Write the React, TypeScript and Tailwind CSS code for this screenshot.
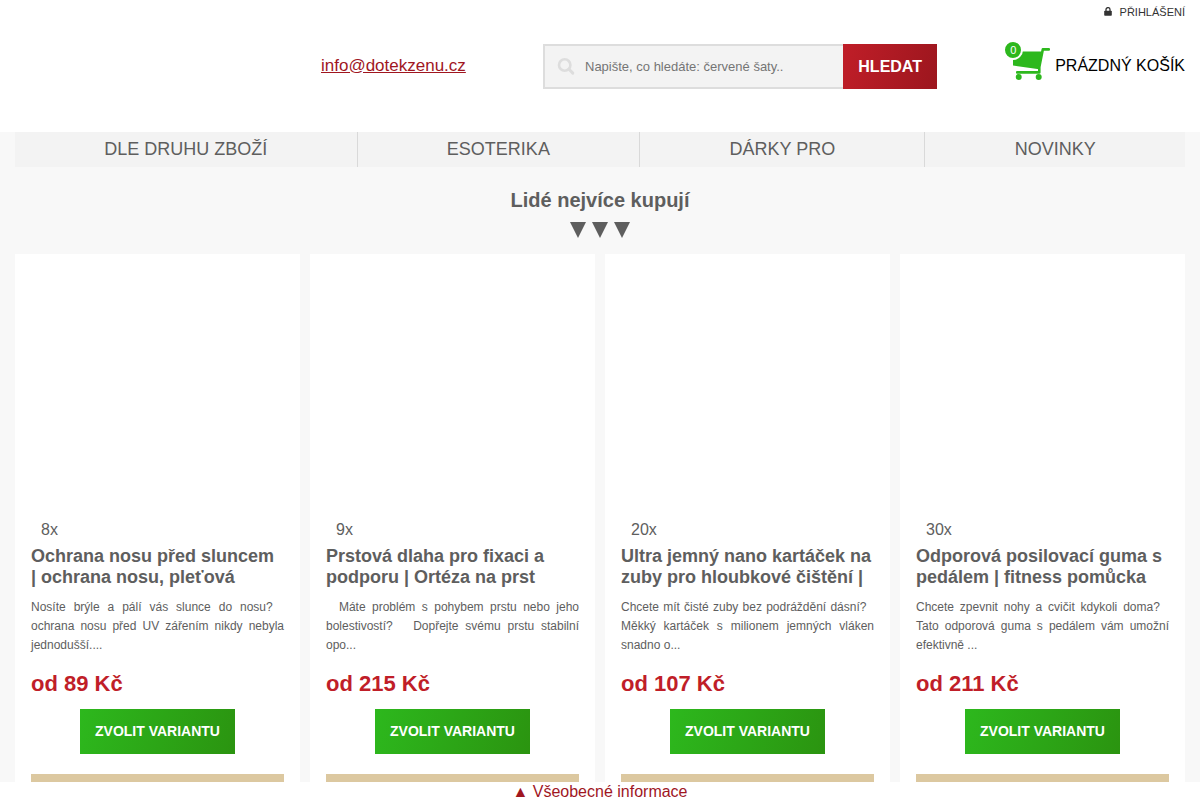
import React from "react";

type Product = {
  sold: string;
  title: string;
  text: string;
  price: string;
};

const categories = ["Dle druhu zboží", "Esoterika", "Dárky pro", "Novinky"];

const products: Product[] = [
  {
    sold: "8x",
    title: "Ochrana nosu před sluncem | ochrana nosu, pleťová",
    text: "Nosíte brýle a pálí vás slunce do nosu?\u00a0\u00a0 ochrana nosu před UV zářením nikdy nebyla jednodušší....",
    price: "od 89 Kč",
  },
  {
    sold: "9x",
    title: "Prstová dlaha pro fixaci a podporu | Ortéza na prst",
    text: "\u00a0\u00a0Máte problém s pohybem prstu nebo jeho bolestivostí?\u00a0\u00a0 Dopřejte svému prstu stabilní opo...",
    price: "od 215 Kč",
  },
  {
    sold: "20x",
    title: "Ultra jemný nano kartáček na zuby pro hloubkové čištění |",
    text: "Chcete mít čisté zuby bez podráždění dásní?\u00a0\u00a0 Měkký kartáček s milionem jemných vláken snadno o...",
    price: "od 107 Kč",
  },
  {
    sold: "30x",
    title: "Odporová posilovací guma s pedálem | fitness pomůcka",
    text: "Chcete zpevnit nohy a cvičit kdykoli doma?\u00a0\u00a0 Tato odporová guma s pedálem vám umožní efektivně ...",
    price: "od 211 Kč",
  },
];

function LockIcon() {
  return (
    <svg className="h-[11px] w-2" viewBox="0 0 8 11" aria-hidden="true">
      <rect x="0.2" y="3.8" width="7.6" height="5" rx="0.8" fill="#333333" />
      <path d="M2 4.4V2.6a2 2 0 0 1 4 0v1.8" fill="none" stroke="#333333" strokeWidth="1.3" />
    </svg>
  );
}

function SearchIcon() {
  return (
    <svg className="h-[18px] w-[18px] shrink-0" viewBox="0 0 18 18" aria-hidden="true">
      <circle cx="7.7" cy="7" r="5.7" fill="none" stroke="#dddddd" strokeWidth="2.6" />
      <path d="M12 11.3L15.8 15.1" stroke="#dddddd" strokeWidth="3" strokeLinecap="round" />
    </svg>
  );
}

function CartIcon() {
  return (
    <svg className="h-[37px] w-[38px]" viewBox="0 0 38 37" aria-hidden="true">
      <path d="M0 4.6H29L26.2 22.2L0 18.6Z" fill="#2db81d" />
      <path
        d="M35.8 2.4H29.8L26.3 20V25.4H4.2"
        fill="none"
        stroke="#2db81d"
        strokeWidth="2.6"
        strokeLinecap="round"
        strokeLinejoin="round"
      />
      <circle cx="5.7" cy="30" r="3" fill="#2db81d" />
      <circle cx="25.7" cy="30" r="3" fill="#2db81d" />
    </svg>
  );
}

function ProductCard({ product }: { product: Product }) {
  return (
    <article className="flex flex-col bg-white px-4">
      <div className="h-[266px]" />
      <p className="pl-[10px] text-base leading-5">{product.sold}</p>
      <h3 className="mt-[6px] h-[42px] overflow-hidden text-lg leading-[21px] font-bold">{product.title}</h3>
      <p className="mt-[10px] h-[57px] text-justify text-xs leading-[19px]">{product.text}</p>
      <p className="mt-4 text-[22px] leading-[26px] font-bold text-[#c01e28]">{product.price}</p>
      <button
        type="button"
        className="mt-3 h-[45px] self-center bg-linear-[105deg] from-[#2db81d] to-[#2b9410] px-[15px] pb-[2px] text-sm font-bold text-white uppercase"
      >
        Zvolit variantu
      </button>
      <div className="mt-5 h-2 bg-[#dcc8a0]" />
    </article>
  );
}

export default function App() {
  return (
    <div className="bg-white font-['Liberation_Sans',Arial,sans-serif] text-[#5e5e5e]">
      <header className="px-[15px] pb-[43px]">
        <div className="flex h-6 justify-end">
          <a href="#login" className="flex items-center gap-2 text-[11px] text-[#333333] uppercase">
            <LockIcon />
            Přihlášení
          </a>
        </div>
        <div className="mt-5 grid grid-cols-[306fr_222fr_394fr_248fr] items-center">
          <div />
          <a href="mailto:info@dotekzenu.cz" className="justify-self-start pb-[2px] text-[17px] leading-5 text-[#a0161f] underline">
            info@dotekzenu.cz
          </a>
          <form className="flex h-[45px]" onSubmit={(e) => e.preventDefault()}>
            <label className="flex min-w-0 flex-1 items-center gap-[10px] border-2 border-r-0 border-[#dddddd] bg-[#f3f3f3] pl-3">
              <SearchIcon />
              <input
                type="text"
                aria-label="Hledat"
                placeholder="Napište, co hledáte: červené šaty.."
                className="min-w-0 flex-1 bg-transparent text-[13px] outline-none placeholder:text-[#757575]"
              />
            </label>
            <button
              type="submit"
              className="bg-linear-[105deg] from-[#c01e28] to-[#9c161e] px-[15px] text-base font-bold text-white uppercase"
            >
              Hledat
            </button>
          </form>
          <a href="#cart" className="flex items-center gap-1 justify-self-end pb-[2px] text-base whitespace-nowrap text-black uppercase">
            <span className="relative">
              <CartIcon />
              <span className="absolute -top-[7px] -left-[10px] flex h-5 w-5 items-center justify-center rounded-full border-2 border-white bg-[#2db81d] text-[11px] leading-none text-white">
                0
              </span>
            </span>
            Prázdný košík
          </a>
        </div>
      </header>

      <main className="bg-[#f8f8f8] px-[15px]">
        <nav className="flex divide-x divide-[#d9d9d9] bg-[#f3f3f3]">
          {categories.map((name) => (
            <a key={name} href="#category" className="h-[35px] flex-auto text-center text-lg leading-[35px] uppercase">
              {name}
            </a>
          ))}
        </nav>
        <h2 className="mt-5 text-center text-xl leading-[26px] font-bold">Lidé nejvíce kupují</h2>
        <div className="mt-[9px] flex justify-center gap-[6px]">
          {[0, 1, 2].map((i) => (
            <svg key={i} className="h-4 w-4" viewBox="0 0 16 16" aria-hidden="true">
              <path d="M0 0H16L8 16Z" fill="#5e5e5e" />
            </svg>
          ))}
        </div>
        <section className="mt-4 grid grid-cols-4 gap-[10px]">
          {products.map((product) => (
            <ProductCard key={product.title} product={product} />
          ))}
        </section>
      </main>

      <footer className="flex justify-center bg-white">
        <a href="#info" className="h-[18px] text-base leading-5 text-[#a0161f]">
          ▲ Všeobecné informace
        </a>
      </footer>
    </div>
  );
}
